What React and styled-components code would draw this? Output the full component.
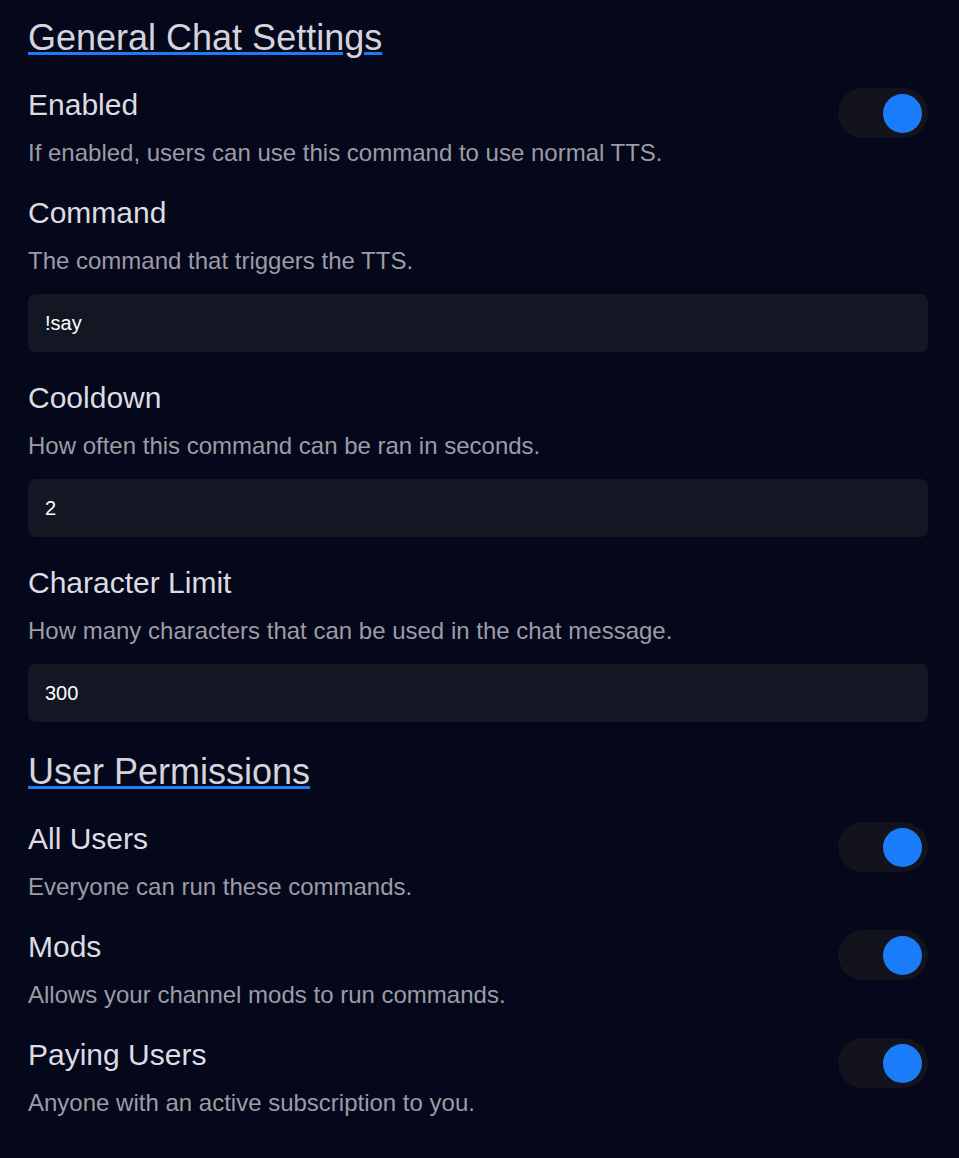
import React, { useState } from "react";
import styled, { createGlobalStyle } from "styled-components";

const GlobalStyle = createGlobalStyle`
  html, body {
    margin: 0;
    background: #05071a;
  }
  body {
    font-family: "Liberation Sans", Arial, sans-serif;
  }
`;

const Page = styled.div`
  min-height: 1158px;
  box-sizing: border-box;
  padding: 15px 31px 0 28px;
  background: #05071a;
  display: flex;
  flex-direction: column;
  gap: 27px;
`;

const SectionTitle = styled.h1`
  margin: 0;
  padding-top: 1px;
  font-size: 36px;
  line-height: 43px;
  font-weight: 400;
  color: #d4d4dc;
  text-decoration: underline;
  text-decoration-color: #1a7cf9;
  text-decoration-thickness: 3px;
  align-self: flex-start;
`;

const Setting = styled.div`
  display: flex;
  align-items: flex-start;
  justify-content: space-between;
`;

const Info = styled.div`
  display: flex;
  flex-direction: column;
  min-width: 0;
`;

const Label = styled.div`
  padding-top: 1px;
  font-size: 30px;
  line-height: 36px;
  color: #dcdce2;
`;

const Desc = styled.div`
  margin-top: 16px;
  font-size: 24px;
  line-height: 28px;
  color: #9c9ca6;
`;

const Field = styled.input`
  margin-top: 19px;
  height: 58px;
  box-sizing: border-box;
  width: 100%;
  border: none;
  outline: none;
  border-radius: 7px;
  background: #131623;
  color: #ffffff;
  font-family: "Liberation Sans", Arial, sans-serif;
  font-size: 20px;
  padding: 0 17px;
`;

const Track = styled.button`
  margin-top: 2px;
  width: 90px;
  height: 50px;
  flex-shrink: 0;
  border: none;
  padding: 0 6px;
  border-radius: 25px;
  background: #12131c;
  display: flex;
  align-items: center;
  justify-content: ${(p) => (p.$on ? "flex-end" : "flex-start")};
  cursor: pointer;
`;

const Knob = styled.span`
  width: 39px;
  height: 39px;
  border-radius: 50%;
  background: ${(p) => (p.$on ? "#1a7cf9" : "#5a5d6b")};
`;

const Toggle = ({ initial = true }) => {
  const [on, setOn] = useState(initial);
  return (
    <Track $on={on} onClick={() => setOn(!on)}>
      <Knob $on={on} />
    </Track>
  );
};

const ToggleSetting = ({ label, desc }) => (
  <Setting>
    <Info>
      <Label>{label}</Label>
      <Desc>{desc}</Desc>
    </Info>
    <Toggle />
  </Setting>
);

const InputSetting = ({ label, desc, value }) => (
  <Info>
    <Label>{label}</Label>
    <Desc>{desc}</Desc>
    <Field type="text" defaultValue={value} />
  </Info>
);

const App = () => {
  return (
    <Page>
      <GlobalStyle />
      <SectionTitle>General Chat Settings</SectionTitle>
      <ToggleSetting
        label="Enabled"
        desc="If enabled, users can use this command to use normal TTS."
      />
      <InputSetting
        label="Command"
        desc="The command that triggers the TTS."
        value="!say"
      />
      <InputSetting
        label="Cooldown"
        desc="How often this command can be ran in seconds."
        value="2"
      />
      <InputSetting
        label="Character Limit"
        desc="How many characters that can be used in the chat message."
        value="300"
      />
      <SectionTitle>User Permissions</SectionTitle>
      <ToggleSetting label="All Users" desc="Everyone can run these commands." />
      <ToggleSetting label="Mods" desc="Allows your channel mods to run commands." />
      <ToggleSetting label="Paying Users" desc="Anyone with an active subscription to you." />
    </Page>
  );
};

export default App;
